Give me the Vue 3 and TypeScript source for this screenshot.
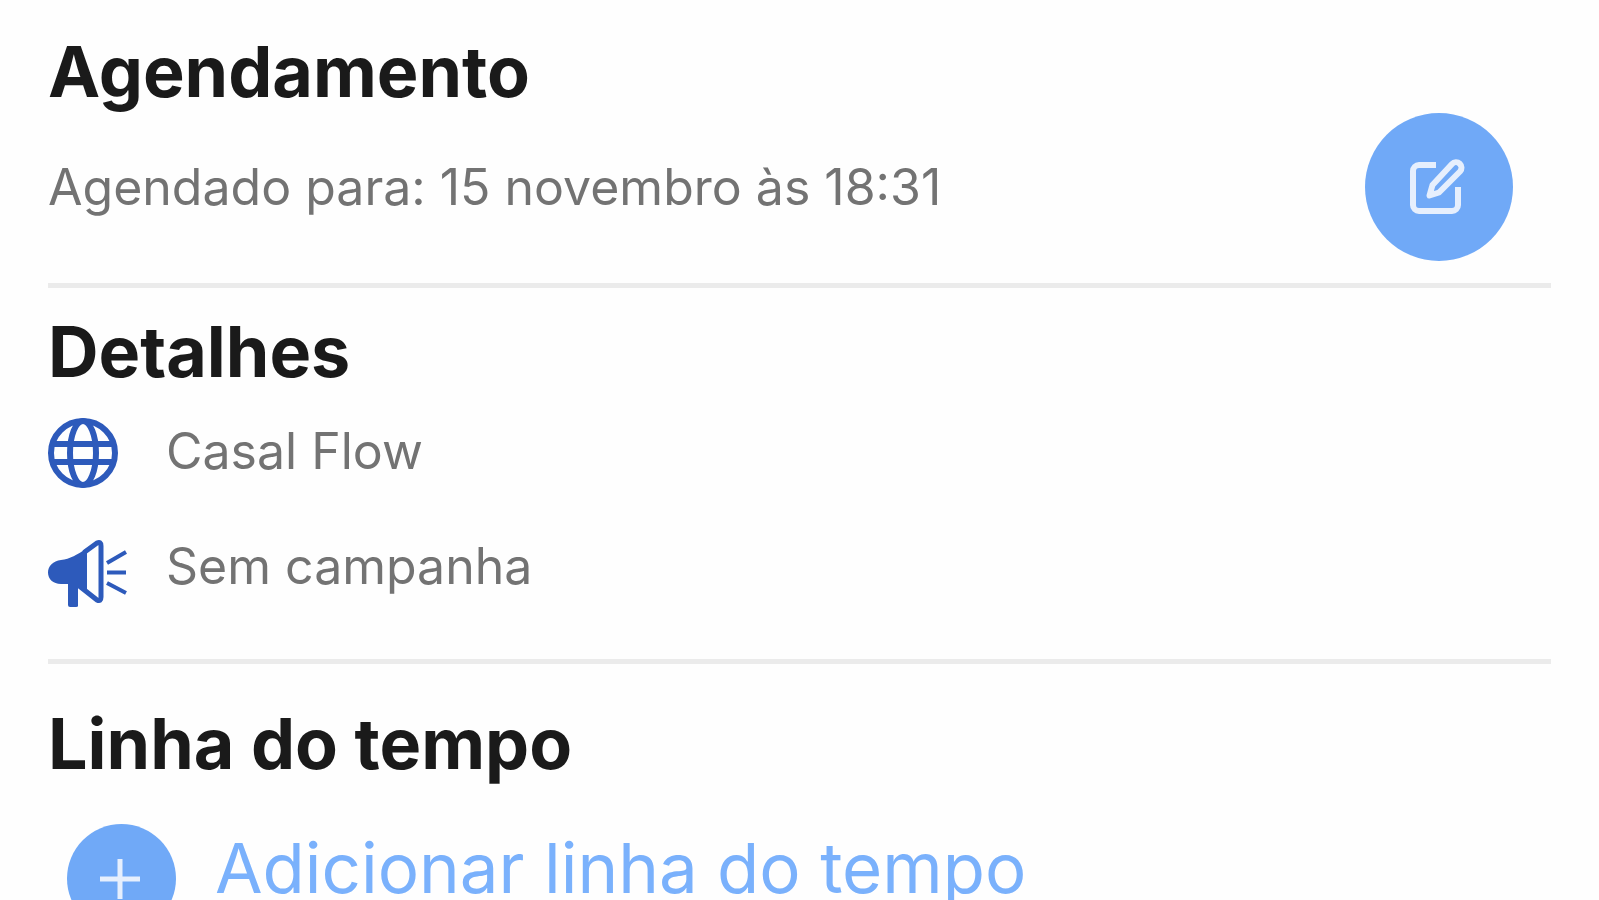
<script setup lang="ts">
interface Detail {
  icon: 'globe' | 'megaphone'
  label: string
}

const scheduledFor = '15 novembro às 18:31'
const details: Detail[] = [
  { icon: 'globe', label: 'Casal Flow' },
  { icon: 'megaphone', label: 'Sem campanha' },
]
</script>

<template>
  <main class="panel">
    <section class="schedule">
      <h2 class="title">Agendamento</h2>
      <div class="schedule-row">
        <p class="text">Agendado para: {{ scheduledFor }}</p>
        <button class="edit" type="button" aria-label="Editar agendamento">
          <svg class="edit-icon" viewBox="0 0 60 60" fill="none" stroke="currentColor" stroke-width="6" stroke-linejoin="round" aria-hidden="true">
            <path d="M29 9H12a6 6 0 0 0-6 6v34a6 6 0 0 0 6 6h33a6 6 0 0 0 6-6V31" />
            <path d="M45 8a5.300 5.300 0 0 1 8 7.500L32 36.500l-9.500 3 3-10.500z" stroke-width="6" />
          </svg>
        </button>
      </div>
    </section>

    <section class="details">
      <h2 class="title">Detalhes</h2>
      <ul class="list">
        <li v-for="item in details" :key="item.label" class="item" :class="item.icon">
          <svg v-if="item.icon === 'globe'" class="item-icon" viewBox="0 -2 80 72" fill="none" stroke="currentColor" stroke-width="6" aria-hidden="true">
            <circle cx="35" cy="36" r="32" />
            <ellipse cx="35" cy="36" rx="13" ry="32" />
            <path d="M5 27h60M5 45h60" />
          </svg>
          <svg v-else class="item-icon" viewBox="0 -1 80 72" fill="none" stroke="currentColor" stroke-width="4" stroke-linejoin="round" aria-hidden="true">
            <path d="M36 15.500 49 6q4-2 4 3v51q0 5-4 3L30 48" stroke-width="5" />
            <path d="M39 11v45l-9-7v20q0 1-2 1h-6q-2 0-2-2V47h-7C5 47 0 42 0 35.500S5 24 13 23c9-1 16-5 26-12z" fill="currentColor" stroke="none" />
            <path d="M59 26 78 15M59 35.500h19M59 46l19 10" />
          </svg>
          <span class="text">{{ item.label }}</span>
        </li>
      </ul>
    </section>

    <section class="timeline">
      <h2 class="title">Linha do tempo</h2>
      <button class="add" type="button">
        <span class="add-badge">
          <svg class="add-icon" viewBox="0 0 40 40" stroke="currentColor" stroke-width="5" aria-hidden="true">
            <path d="M18 0v40M-2 20h40" />
          </svg>
        </span>
        <span class="add-label">Adicionar linha do tempo</span>
      </button>
    </section>
  </main>
</template>

<style>
body {
  margin: 0;
  background: #fefefe;
}
</style>

<style scoped>
.panel {
  box-sizing: border-box;
  height: 100vh;
  overflow: hidden;
  padding: 32px 48px 0;
  font-family: Inter, "Liberation Sans", sans-serif;
  color: #1a1a1a;
}

.title {
  margin: 0;
  font-size: 70px;
  line-height: 80px;
  font-weight: 700;
}

.text {
  margin: 0;
  font-size: 50px;
  line-height: 60px;
  color: #737373;
}

.schedule {
  padding-bottom: 22px;
  border-bottom: 5px solid #ebebeb;
}

.schedule-row {
  display: flex;
  align-items: center;
  justify-content: space-between;
  margin-top: 1px;
  padding-right: 38px;
}

.edit {
  display: grid;
  place-items: center;
  flex: none;
  width: 148px;
  height: 148px;
  padding: 0 4px 2px 0;
  border: 0;
  border-radius: 50%;
  background: #70a9f7;
  color: #e6effd;
}

.edit-icon {
  width: 60px;
  height: 60px;
}

.details {
  padding: 24px 0 51px;
  border-bottom: 5px solid #ebebeb;
}

.list {
  display: grid;
  gap: 49px;
  margin: 23px 0 0;
  padding: 0;
  list-style: none;
}

.item {
  display: flex;
  align-items: center;
  gap: 38px;
}

.megaphone {
  align-items: flex-start;
}

.item-icon {
  flex: none;
  width: 80px;
  height: 72px;
  overflow: visible;
  color: #2d5abb;
}

.timeline {
  padding-top: 40px;
}

.add {
  display: flex;
  align-items: flex-start;
  gap: 39px;
  margin: 40px 0 0 19px;
  padding: 0;
  border: 0;
  background: none;
  font: inherit;
  color: #7ab1fc;
}

.add-badge {
  display: grid;
  place-items: center;
  flex: none;
  width: 109px;
  height: 109px;
  border-radius: 50%;
  background: #70a9f7;
  color: #e6effd;
}

.add-icon {
  width: 40px;
  height: 40px;
  overflow: visible;
}

.add-label {
  font-size: 69px;
  line-height: 88px;
}
</style>
